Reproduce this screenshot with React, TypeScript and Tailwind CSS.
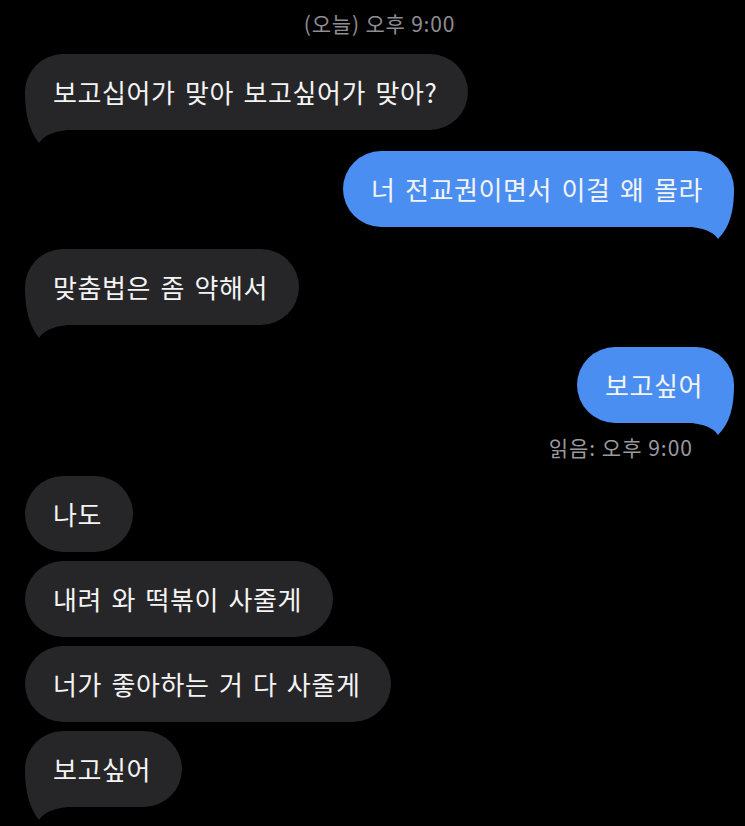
import React from "react";

type Msg = { text: string; me: boolean; tail: boolean; mt: string };

const GRAY = "#262628";
const BLUE = "#4b8ef1";

function TailLeft() {
  return (
    <svg
      className="absolute left-0 top-[38px]"
      width="42"
      height="52"
      viewBox="0 0 42 52"
      aria-hidden
    >
      <path d="M0,0 C0,22 4,38 14,51 C18,45 25,40 42,38 L42,0 Z" fill={GRAY} />
    </svg>
  );
}

function TailRight() {
  return (
    <svg
      className="absolute right-0 top-[38px]"
      width="42"
      height="51"
      viewBox="0 0 42 51"
      aria-hidden
    >
      <path d="M42,0 C42,22 38,38 26,50 C23,45 16,40 0,38 L0,0 Z" fill={BLUE} />
    </svg>
  );
}

function Bubble({ text, me, tail }: { text: string; me: boolean; tail: boolean }) {
  return (
    <div className={me ? "flex justify-end" : "flex justify-start"}>
      <div
        className={
          "relative h-[76px] rounded-[38px] pl-[28px] pr-[31px] flex items-center text-[26px] leading-none tracking-[0.6px] text-[#f4f4f4] [word-spacing:3px] " +
          (me ? "bg-[#4b8ef1]" : "bg-[#262628]")
        }
      >
        {tail && (me ? <TailRight /> : <TailLeft />)}
        <span className="relative whitespace-nowrap">{text}</span>
      </div>
    </div>
  );
}

export default function App() {
  const msgs: Msg[] = [
    { text: "보고십어가 맞아 보고싶어가 맞아?", me: false, tail: true, mt: "mt-[19px]" },
    { text: "너 전교권이면서 이걸 왜 몰라", me: true, tail: true, mt: "mt-[21px]" },
    { text: "맞춤법은 좀 약해서", me: false, tail: true, mt: "mt-[22px]" },
    { text: "보고싶어", me: true, tail: true, mt: "mt-[22px]" },
  ];
  const msgs2: Msg[] = [
    { text: "나도", me: false, tail: false, mt: "mt-[17px]" },
    { text: "내려 와 떡볶이 사줄게", me: false, tail: false, mt: "mt-[9px]" },
    { text: "너가 좋아하는 거 다 사줄게", me: false, tail: false, mt: "mt-[9px]" },
    { text: "보고싶어", me: false, tail: true, mt: "mt-[9px]" },
  ];
  return (
    <div
      className="w-[745px] h-[826px] overflow-hidden bg-black pl-[25px] pr-[11px] pt-[11px]"
      style={{ fontFamily: '"Noto Sans CJK KR", "Noto Sans", sans-serif' }}
    >
      <div className="h-[24px] leading-[24px] text-center text-[21px] tracking-[0.8px] text-[#8e8e93]">
        (오늘) 오후 9:00
      </div>
      {msgs.map((m, i) => (
        <div key={i} className={m.mt}>
          <Bubble text={m.text} me={m.me} tail={m.tail} />
        </div>
      ))}
      <div className="mt-[12px] flex justify-end pr-[41px] h-[24px] leading-[24px] text-[21px] tracking-[1px] text-[#9a9a9f]">
        읽음: 오후 9:00
      </div>
      {msgs2.map((m, i) => (
        <div key={i} className={m.mt}>
          <Bubble text={m.text} me={m.me} tail={m.tail} />
        </div>
      ))}
    </div>
  );
}
